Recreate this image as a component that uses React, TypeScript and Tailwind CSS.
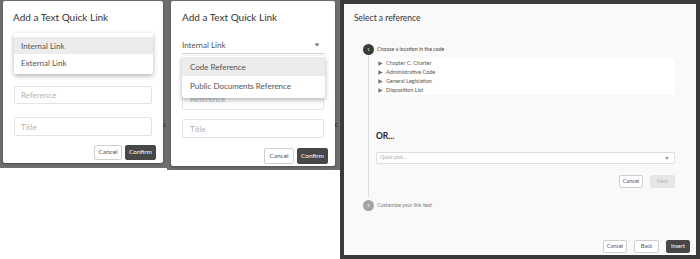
import React from "react";

function Btn({ children, dark, disabled, cls }: { children: React.ReactNode; dark?: boolean; disabled?: boolean; cls: string }) {
  const base = "flex items-center justify-center rounded-[2px] leading-none ";
  const look = dark
    ? "bg-[#474747] text-white border border-[#474747] "
    : disabled
    ? "bg-[#e6e6e6] text-[#b5b5b5] border border-[#e6e6e6] "
    : "bg-white text-[#555] border border-[#cfcfcf] ";
  return <div className={base + look + cls}>{children}</div>;
}

function Tri() {
  return (
    <svg width="5" height="5" viewBox="0 0 5 5" className="shrink-0">
      <path d="M0.3 0.2 L4.8 2.5 L0.3 4.8 Z" fill="#777" />
    </svg>
  );
}

export default function App() {
  return (
    <div className="w-[700px] h-[259px] bg-white flex items-start overflow-hidden font-[Lato,'Open_Sans',sans-serif] text-[#444]">
      {/* Panel 1 */}
      <div className="w-[167px] h-[168px] bg-[#6f6f6f] pt-[1px] pl-[3px] relative">
        <span className="absolute left-[163px] top-[121px] text-[7px] text-[#222] leading-none">c</span>
        <div className="w-[160px] h-[162px] bg-white rounded-[2px] relative flex flex-col shadow-[0_1px_3px_rgba(0,0,0,0.3)]">
          <div className="pt-[10px] pl-[10px] text-[10px] leading-[12px] text-[#333]">Add a Text Quick Link</div>
          <div className="mx-[11px] mt-[14px] h-[16px] border-b border-[#ccc]" />
          <div className="mx-[11px] mt-[33px] h-[18px] border border-[#e3e3e3] rounded-[2px] px-[6px] flex items-center text-[8px] text-[#b3b3b3]">Reference</div>
          <div className="mx-[11px] mt-[13px] h-[19px] border border-[#e3e3e3] rounded-[2px] px-[6px] flex items-center text-[8px] text-[#b3b3b3]">Title</div>
          <div className="flex justify-end gap-[3px] pr-[7px] mt-[9px]">
            <Btn cls="w-[28px] h-[15px] text-[6.5px]">Cancel</Btn>
            <Btn dark cls="w-[31px] h-[15px] text-[6.5px]">Confirm</Btn>
          </div>
          {/* open menu */}
          <div className="absolute left-[11px] top-[32px] w-[139px] h-[41px] bg-white rounded-[2px] shadow-[0_2px_5px_rgba(0,0,0,0.3)] pt-[4px] flex flex-col">
            <div className="h-[17px] bg-[#ececec] pl-[7px] flex items-center text-[8px] text-[#555]">Internal Link</div>
            <div className="h-[17px] pl-[7px] flex items-center text-[8px] text-[#555]">External Link</div>
          </div>
        </div>
      </div>

      {/* Panel 2 */}
      <div className="w-[173px] h-[170px] bg-[#6f6f6f] pt-[1px] pl-[4px] relative">
        <span className="absolute left-[166px] top-[121px] text-[7px] text-[#222] leading-none">ic</span>
        <div className="w-[164px] h-[165px] bg-white rounded-[2px] relative flex flex-col shadow-[0_1px_3px_rgba(0,0,0,0.3)]">
          <div className="pt-[10px] pl-[11px] text-[10px] leading-[12px] text-[#333]">Add a Text Quick Link</div>
          <div className="mx-[11px] mt-[14px] h-[17px] border-b border-[#d5d5d5] flex items-center justify-between text-[8px] text-[#555]">
            <span>Internal Link</span>
            <svg width="6" height="4" viewBox="0 0 6 4" className="mr-[4px]">
              <path d="M0.5 0.5 L5.5 0.5 L3 3.5 Z" fill="#777" />
            </svg>
          </div>
          <div className="mx-[11px] mt-[34px] h-[22px] border border-[#e3e3e3] rounded-[2px] px-[7px] flex items-center text-[8px] text-[#b3b3b3]">Reference</div>
          <div className="mx-[11px] mt-[9px] h-[19px] border border-[#e3e3e3] rounded-[2px] px-[7px] flex items-center text-[8px] text-[#b3b3b3]">Title</div>
          <div className="flex justify-end gap-[3px] pr-[7px] mt-[10px]">
            <Btn cls="w-[30px] h-[16px] text-[6.5px]">Cancel</Btn>
            <Btn dark cls="w-[31px] h-[16px] text-[6.5px]">Confirm</Btn>
          </div>
          <div className="absolute left-[11px] top-[55px] w-[143px] h-[42px] bg-white rounded-[2px] shadow-[0_2px_5px_rgba(0,0,0,0.3)] pt-[1px] flex flex-col">
            <div className="h-[19px] bg-[#ececec] pl-[8px] flex items-center text-[8px] text-[#555]">Code Reference</div>
            <div className="h-[19px] pl-[8px] flex items-center text-[8px] text-[#555]">Public Documents Reference</div>
          </div>
        </div>
      </div>

      {/* Panel 3 */}
      <div className="w-[360px] h-[259px] bg-[#3b3b3b] pt-[4px] pl-[4px]">
        <div className="w-[352px] h-[251px] bg-[#f9f9f9] flex flex-col">
          <div className="pt-[8px] pl-[10px] text-[8.5px] leading-[12px] text-[#333]">Select a reference</div>
          {/* step 1 header */}
          <div className="mt-[20px] pl-[19px] flex items-center h-[11px]">
            <div className="w-[11px] h-[11px] rounded-full bg-[#3a3a3a] text-white text-[4px] flex items-center justify-center leading-none">1</div>
            <span className="ml-[3px] text-[5.2px] text-[#444]">Choose a location in the code</span>
          </div>
          {/* step 1 body */}
          <div className="ml-[24px] border-l-[1.5px] border-[#dcdcdc] pl-[7px] pr-[21px] pt-[3px] pb-[9px]">
            <div className="bg-white h-[37px] pt-[1px] flex flex-col">
              {["Chapter C: Charter", "Administrative Code", "General Legislation", "Disposition List"].map((t) => (
                <div key={t} className="h-[9px] flex items-center pl-[2px] gap-[3px] text-[5.5px] text-[#555]">
                  <Tri />
                  <span>{t}</span>
                </div>
              ))}
            </div>
            <div className="mt-[36px] text-[8.5px] font-bold leading-[10px] text-[#222]">OR...</div>
            <div className="mt-[11px] h-[12px] bg-white border border-[#dedede] rounded-[1px] pl-[3px] pr-[5px] flex items-center justify-between text-[5px] text-[#aaa]">
              <span>Quick pick...</span>
              <svg width="4" height="3" viewBox="0 0 4 3">
                <path d="M0 0 L4 0 L2 3 Z" fill="#999" />
              </svg>
            </div>
            <div className="mt-[11px] flex justify-end gap-[7px]">
              <Btn cls="w-[24px] h-[13px] text-[5.5px]">Cancel</Btn>
              <Btn disabled cls="w-[25px] h-[13px] text-[5.5px]">Next</Btn>
            </div>
          </div>
          {/* step 2 */}
          <div className="mt-[3px] pl-[19px] flex items-center h-[11px]">
            <div className="w-[11px] h-[11px] rounded-full bg-[#a3a3a3] text-white text-[4px] flex items-center justify-center leading-none">2</div>
            <span className="ml-[3px] text-[5.2px] text-[#777]">Customize your link text</span>
          </div>
          <div className="mt-auto mb-[2px] pr-[6px] flex justify-end gap-[7px]">
            <Btn cls="w-[24px] h-[13px] text-[5.5px]">Cancel</Btn>
            <Btn cls="w-[25px] h-[13px] text-[5.5px]">Back</Btn>
            <Btn dark cls="w-[24px] h-[13px] text-[5.5px]">Insert</Btn>
          </div>
        </div>
      </div>
    </div>
  );
}
